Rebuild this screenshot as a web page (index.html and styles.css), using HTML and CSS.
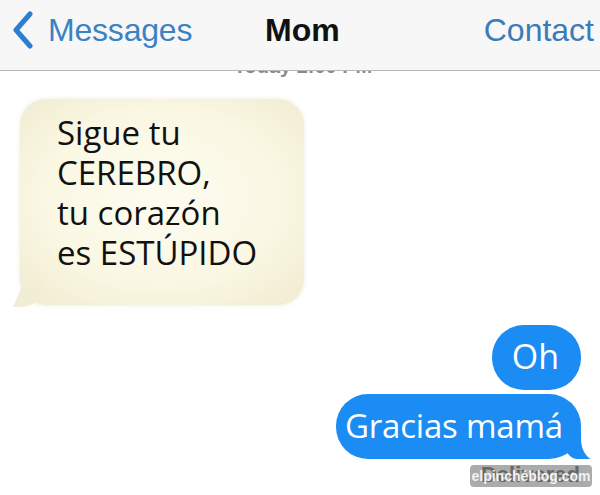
FILE: index.html
```html
<!DOCTYPE html>
<html lang="es">
<head>
<meta charset="utf-8">
<link rel="stylesheet" href="styles.css">
</head>
<body>
<div class="screen">
  <header class="nav">
    <div class="nav-back">
      <svg class="chev" width="24" height="38" viewBox="0 0 24 38"><path d="M19 3 L5 19 L19 35" fill="none" stroke="#2c7fd0" stroke-width="5" stroke-linecap="round" stroke-linejoin="round"/></svg>
      <span>Messages</span>
    </div>
    <div class="nav-title">Mom</div>
    <div class="nav-right">Contact</div>
  </header>
  <div class="stamp">Today 2:00 PM</div>
  <div class="thread">
    <div class="bubble-in">
      <p>Sigue tu<br>CEREBRO,<br>tu corazón<br>es ESTÚPIDO</p>
    </div>
    <div class="out-group">
      <div class="bubble-out">Oh</div>
      <div class="bubble-out last">Gracias mamá</div>
      <div class="status">
        <span class="delivered">Delivered</span>
        <span class="mark">elpinchéblog.com</span>
      </div>
    </div>
  </div>
</div>
</body>
</html>
```
FILE: styles.css
```css
html, body { margin: 0; padding: 0; background: #fff; }
.screen { width: 600px; height: 495px; overflow: hidden; position: relative; font-family: "Liberation Sans", Arial, sans-serif; }
.nav { position: relative; z-index: 2; height: 71px; background: #f7f7f7; border-bottom: 1px solid #b8b8b8; display: flex; align-items: flex-start; padding-top: 11px; box-sizing: border-box; font-size: 32px; line-height: 38px; }
.nav-back { display: flex; align-items: center; color: #3a82c4; padding-left: 11px; width: 254px; }
.chev { margin-right: 13px; }
.nav-back span { letter-spacing: -0.2px; }
.nav-title { font-weight: bold; color: #111; }
.nav-right { color: #3a7cb8; margin-left: auto; margin-right: 6px; }
.stamp { position: relative; z-index: 1; margin-top: -16px; text-align: center; font-size: 20px; font-weight: bold; color: #8a8a8a; height: 22px; line-height: 22px; padding-left: 6px; }
.thread { padding: 0 0 0 20px; }
.bubble-in { position: relative; margin-top: 22px; width: 284px; height: 206px; border-radius: 26px; background: radial-gradient(ellipse 75% 75% at 50% 48%, #fdfcef 0%, #faf7e3 55%, #efeace 100%); box-shadow: 0 0 4px rgba(200,195,160,0.35); box-sizing: border-box; padding: 14px 0 0 37px; }
.bubble-in::after { content: ""; position: absolute; left: -7px; bottom: -2px; width: 28px; height: 26px; background: #f2eed5; border-bottom-right-radius: 22px 14px; clip-path: polygon(0 100%, 40% 0, 100% 0, 100% 100%); }
.bubble-in p { margin: 0; font-family: "Open Sans", "DejaVu Sans", sans-serif; font-size: 33px; line-height: 40px; color: #111; }
.out-group { display: flex; flex-direction: column; align-items: flex-end; padding-right: 19px; margin-top: 20px; }
.bubble-out { background: #1b8cf3; color: #fff; font-family: "Open Sans", "DejaVu Sans", sans-serif; font-size: 34px; height: 65px; line-height: 63px; border-radius: 32px; padding: 0 22px 0 20px; box-sizing: border-box; position: relative; white-space: nowrap; }
.bubble-out.last { margin-top: 4px; padding: 0 0 0 9px; width: 245px; font-size: 33px; letter-spacing: -0.2px; }
.bubble-out.last::before { content: ""; position: absolute; right: -14px; bottom: 0; width: 34px; height: 30px; background: #1b8cf3; border-bottom-left-radius: 16px 30px; border-bottom-right-radius: 4px; }
.bubble-out.last::after { content: ""; position: absolute; right: -24px; bottom: -2px; width: 24px; height: 34px; background: #fff; border-bottom-left-radius: 16px 22px; }
.status { position: relative; z-index: 1; margin-top: 6px; margin-right: -11px; width: 122px; height: 22px; }
.delivered { position: absolute; right: 12px; top: -3px; font-size: 22px; font-weight: bold; color: #4a4a4a; }
.mark { position: absolute; inset: 0; background: rgba(120,120,120,0.62); border-radius: 4px; color: #f2f2f2; font-size: 14px; font-weight: bold; text-align: center; line-height: 22px; letter-spacing: 0; white-space: nowrap; overflow: hidden; }
```
